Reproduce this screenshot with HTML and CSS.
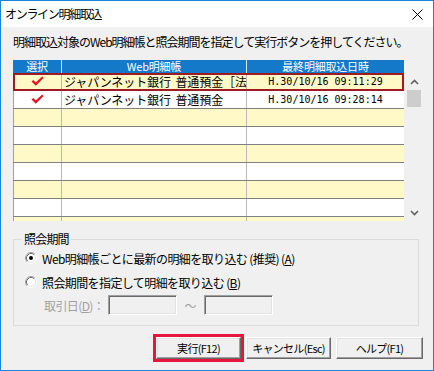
FILE: index.html
```html
<!DOCTYPE html>
<html lang="ja">
<head>
<meta charset="utf-8">
<link rel="stylesheet" href="styles.css">
</head>
<body>
<div class="win">
  <div class="titlebar">
    <span class="title">オンライン明細取込</span>
    <svg class="close" width="11" height="11" viewBox="0 0 11 11"><path d="M0.5 0.5 L10.5 10.5 M10.5 0.5 L0.5 10.5" stroke="#000" stroke-width="1" fill="none"/></svg>
  </div>
  <div class="client">
    <p class="msg">明細取込対象のWeb明細帳と照会期間を指定して実行ボタンを押してください。</p>
    <div class="list">
      <div class="grid">
        <div class="hdr">
          <div class="c1">選択</div>
          <div class="c2">Web明細帳</div>
          <div class="c3">最終明細取込日時</div>
        </div>
        <div class="rows">
          <div class="row y sel">
            <div class="c1"><svg class="chk" width="13" height="11" viewBox="0 0 13 11"><path d="M0.5 5.5 L2.3 4 L4.8 6.6 L11.2 0.6 L12.5 1.9 L4.8 9.8 Z" fill="#e3141d"/></svg></div>
            <div class="c2">ジャパンネット銀行 普通預金［法人］</div>
            <div class="c3 dt">H.30/10/16 09:11:29</div>
          </div>
          <div class="row">
            <div class="c1"><svg class="chk" width="13" height="11" viewBox="0 0 13 11"><path d="M0.5 5.5 L2.3 4 L4.8 6.6 L11.2 0.6 L12.5 1.9 L4.8 9.8 Z" fill="#e3141d"/></svg></div>
            <div class="c2">ジャパンネット銀行 普通預金</div>
            <div class="c3 dt">H.30/10/16 09:28:14</div>
          </div>
          <div class="row y"><div class="c1"></div><div class="c2"></div><div class="c3"></div></div>
          <div class="row"><div class="c1"></div><div class="c2"></div><div class="c3"></div></div>
          <div class="row y"><div class="c1"></div><div class="c2"></div><div class="c3"></div></div>
          <div class="row"><div class="c1"></div><div class="c2"></div><div class="c3"></div></div>
          <div class="row y"><div class="c1"></div><div class="c2"></div><div class="c3"></div></div>
          <div class="row"><div class="c1"></div><div class="c2"></div><div class="c3"></div></div>
          <div class="row y"><div class="c1"></div><div class="c2"></div><div class="c3"></div></div>
        </div>
      </div>
      <div class="vscroll">
        <div class="sbtn"><svg width="9" height="6" viewBox="0 0 9 6"><path d="M1 5 L4.5 1.5 L8 5" stroke="#606060" stroke-width="1.6" fill="none"/></svg></div>
        <div class="thumb"></div>
        <div class="track"></div>
        <div class="sbtn"><svg width="9" height="6" viewBox="0 0 9 6"><path d="M1 1 L4.5 4.5 L8 1" stroke="#606060" stroke-width="1.6" fill="none"/></svg></div>
      </div>
    </div>
    <fieldset class="group">
      <legend class="glabel">照会期間</legend>
      <div class="opt">
        <svg class="radio" width="12" height="12" viewBox="0 0 12 12">
          <circle cx="6" cy="6" r="5" fill="#fff"/>
          <path d="M2.11 9.89 A5.5 5.5 0 0 1 9.89 2.11" stroke="#a0a0a0" fill="none"/>
          <path d="M9.89 2.11 A5.5 5.5 0 0 1 2.11 9.89" stroke="#fff" fill="none"/>
          <path d="M2.82 9.18 A4.5 4.5 0 0 1 9.18 2.82" stroke="#696969" fill="none"/>
          <path d="M9.18 2.82 A4.5 4.5 0 0 1 2.82 9.18" stroke="#e3e3e3" fill="none"/>
          <circle cx="6" cy="6" r="2" fill="#000"/>
        </svg>
        <span class="otext">Web明細帳ごとに最新の明細を取り込む (推奨) (<u>A</u>)</span>
      </div>
      <div class="opt">
        <svg class="radio" width="12" height="12" viewBox="0 0 12 12">
          <circle cx="6" cy="6" r="5" fill="#fff"/>
          <path d="M2.11 9.89 A5.5 5.5 0 0 1 9.89 2.11" stroke="#a0a0a0" fill="none"/>
          <path d="M9.89 2.11 A5.5 5.5 0 0 1 2.11 9.89" stroke="#fff" fill="none"/>
          <path d="M2.82 9.18 A4.5 4.5 0 0 1 9.18 2.82" stroke="#696969" fill="none"/>
          <path d="M9.18 2.82 A4.5 4.5 0 0 1 2.82 9.18" stroke="#e3e3e3" fill="none"/>
        </svg>
        <span class="otext">照会期間を指定して明細を取り込む (<u>B</u>)</span>
      </div>
      <div class="daterow">
        <span class="dlabel">取引日(<u>D</u>)：</span>
        <span class="dbox"></span>
        <span class="tilde">～</span>
        <span class="dbox"></span>
      </div>
    </fieldset>
    <div class="buttons">
      <button class="btn primary">実行(F12)</button>
      <button class="btn">キャンセル(Esc)</button>
      <button class="btn wide">ヘルプ(F1)</button>
    </div>
  </div>
</div>
</body>
</html>
```
FILE: styles.css
```css
* { box-sizing: border-box; }
body {
  margin: 0;
  font-family: "Noto Sans CJK JP", "Noto Sans", sans-serif;
  font-size: 12px;
  color: #000;
}
.win {
  width: 434px;
  height: 371px;
  border: 1px solid #1a84d8;
  background: #f0f0f0;
  display: flex;
  flex-direction: column;
  overflow: hidden;
}
.titlebar {
  height: 26px;
  background: #fff;
  display: flex;
  align-items: center;
  justify-content: space-between;
  padding: 0 10px 0 4px;
  flex: none;
}
.title {
  font-size: 12px;
  letter-spacing: -1.3px;
  line-height: 14px;
}
.close { display: block; }
.client {
  flex: 1;
  display: flex;
  flex-direction: column;
  padding-left: 12px;
}
.msg {
  margin: 8px 0 0;
  height: 14px;
  line-height: 14px;
  letter-spacing: -1px;
  white-space: nowrap;
}
.list {
  margin-top: 11px;
  display: flex;
  height: 161px;
  width: 409px;
  flex: none;
}
.grid {
  width: 391px;
  height: 161px;
  display: flex;
  flex-direction: column;
}
.hdr {
  display: flex;
  flex: none;
  height: 13px;
  background: #1479c9;
  color: #fff;
  line-height: 13px;
  font-size: 11px;
  text-align: center;
  letter-spacing: -0.2px;
}
.rows {
  flex: 1;
  overflow: hidden;
}
.c1 { width: 48px; flex: none; }
.c2 { width: 185px; flex: none; white-space: nowrap; }
.c3 { width: 158px; flex: none; white-space: nowrap; }
.row .c2, .row .c3 { overflow: hidden; }
.hdr .c2, .hdr .c3 { border-left: 1px solid #dbe7f2; }
.row {
  display: flex;
  height: 18px;
  background: #fff;
  border-bottom: 1px solid #808080;
  line-height: 17px;
}
.row.y { background: #fff9c8; }
.row .c1 {
  border-left: 1px solid #a0a0a0;
  display: flex;
  align-items: center;
  justify-content: center;
}
.row .c2, .row .c3 { border-left: 1px solid #b9b9b9; }
.row .c2 { padding-left: 2px; letter-spacing: -0.1px; word-spacing: 2px; }
.row .dt {
  text-align: center;
  font-family: "DejaVu Sans Mono", monospace;
  font-size: 10px;
  letter-spacing: 0;
}
.sel { outline: 2px solid #a11a21; outline-offset: -2px; }
.chk { display: block; }
.vscroll {
  width: 18px;
  margin-top: 13px;
  display: flex;
  flex-direction: column;
}
.sbtn {
  height: 17px;
  display: flex;
  align-items: center;
  justify-content: center;
  padding-left: 2px;
}
.thumb {
  height: 17px;
  margin: 0 1px 0 3px;
  background: #cdcdcd;
}
.track { flex: 1; }
.group {
  margin: 11px 0 0;
  width: 406px;
  height: 94px;
  border: 1px solid #dcdcdc;
  padding: 0 0 0 11px;
  min-width: 0;
}
.glabel {
  padding: 0 2px;
  margin-left: -3px;
  line-height: 14px;
  letter-spacing: -0.8px;
}
.opt {
  height: 24px;
  display: flex;
  align-items: center;
}
.radio { display: block; flex: none; }
.otext {
  margin-left: 5px;
  letter-spacing: -0.6px;
  white-space: nowrap;
}
.daterow {
  height: 22px;
  display: flex;
  align-items: center;
  padding-left: 19px;
  color: #a0a0a0;
}
.dlabel { width: 64px; letter-spacing: -0.6px; white-space: nowrap; }
.dbox {
  width: 69px;
  height: 20px;
  background: #f0f0f0;
  border: 1px solid;
  border-color: #a0a0a0 #fff #fff #a0a0a0;
  box-shadow: inset 1px 1px 0 #696969, inset -1px -1px 0 #e3e3e3;
}
.tilde { width: 27px; text-align: center; }
.buttons {
  margin-top: 11px;
  display: flex;
  justify-content: flex-end;
  gap: 5px;
  padding-right: 10px;
}
.btn {
  width: 85px;
  height: 22px;
  padding: 0;
  font-family: "Noto Sans CJK JP", "Noto Sans", sans-serif;
  font-size: 11px;
  letter-spacing: -0.7px;
  color: #000;
  background: #f0f0f0;
  border: 1px solid;
  border-color: #fff #696969 #696969 #fff;
  box-shadow: inset -1px -1px 0 #a0a0a0, inset 1px 1px 0 #e3e3e3;
  line-height: 18px;
  white-space: nowrap;
}
.btn.wide { width: 87px; }
.btn.primary { outline: 3px solid #e8163c; outline-offset: 0; }
```
